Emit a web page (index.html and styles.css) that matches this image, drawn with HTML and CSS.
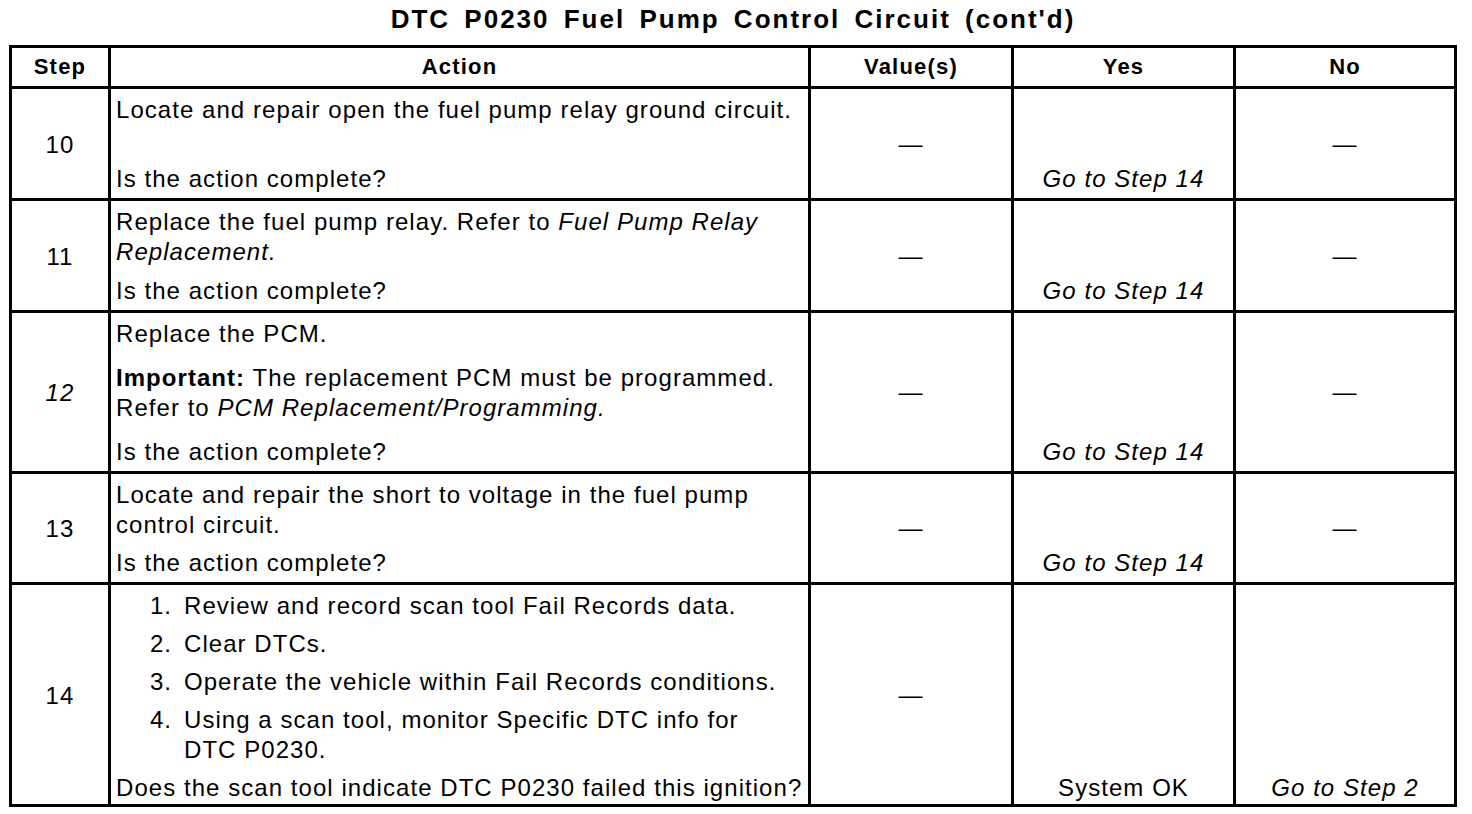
FILE: index.html
```html
<!DOCTYPE html>
<html>
<head>
<meta charset="utf-8">
<link rel="stylesheet" href="styles.css">
</head>
<body>
<div class="page">
  <h1 class="title">DTC P0230 Fuel Pump Control Circuit (cont'd)</h1>
  <div class="table">
    <div class="th">Step</div>
    <div class="th">Action</div>
    <div class="th">Value(s)</div>
    <div class="th">Yes</div>
    <div class="th">No</div>

    <div class="step">10</div>
    <div class="action">
      <p>Locate and repair open the fuel pump relay ground circuit.</p>
      <p>Is the action complete?</p>
    </div>
    <div class="center">—</div>
    <div class="bottom"><i>Go to Step 14</i></div>
    <div class="center">—</div>

    <div class="step">11</div>
    <div class="action">
      <p>Replace the fuel pump relay. Refer to <i>Fuel Pump Relay Replacement.</i></p>
      <p>Is the action complete?</p>
    </div>
    <div class="center">—</div>
    <div class="bottom"><i>Go to Step 14</i></div>
    <div class="center">—</div>

    <div class="step"><i>12</i></div>
    <div class="action">
      <p>Replace the PCM.</p>
      <p><b>Important:</b> The replacement PCM must be programmed. Refer to <i>PCM Replacement/Programming.</i></p>
      <p>Is the action complete?</p>
    </div>
    <div class="center">—</div>
    <div class="bottom"><i>Go to Step 14</i></div>
    <div class="center">—</div>

    <div class="step">13</div>
    <div class="action">
      <p>Locate and repair the short to voltage in the fuel pump control circuit.</p>
      <p>Is the action complete?</p>
    </div>
    <div class="center">—</div>
    <div class="bottom"><i>Go to Step 14</i></div>
    <div class="center">—</div>

    <div class="step">14</div>
    <div class="action last">
      <div class="item"><span class="num">1.</span><span class="txt">Review and record scan tool Fail Records data.</span></div>
      <div class="item"><span class="num">2.</span><span class="txt">Clear DTCs.</span></div>
      <div class="item"><span class="num">3.</span><span class="txt">Operate the vehicle within Fail Records conditions.</span></div>
      <div class="item"><span class="num">4.</span><span class="txt">Using a scan tool, monitor Specific DTC info for DTC P0230.</span></div>
      <p class="nowrap">Does the scan tool indicate DTC P0230 failed this ignition?</p>
    </div>
    <div class="center">—</div>
    <div class="bottom last">System OK</div>
    <div class="bottom last"><i>Go to Step 2</i></div>
  </div>
</div>
</body>
</html>
```
FILE: styles.css
```css
html, body {
  margin: 0;
  padding: 0;
  background: #fff;
  color: #000;
}
body {
  font-family: "Liberation Sans", Arial, sans-serif;
}
.page {
  width: 1448px;
  margin-left: 9px;
}
.title {
  margin: 0;
  height: 45px;
  box-sizing: border-box;
  padding-top: 4px;
  line-height: 30px;
  font-size: 26px;
  font-weight: bold;
  letter-spacing: 2px;
  word-spacing: 5px;
  text-align: center;
}
.table {
  display: grid;
  grid-template-columns: 96px 697px 200px 219px 218px;
  grid-template-rows: 38px 109px 109px 158px 108px 219px;
  gap: 3px;
  padding: 3px;
  background: #000;
  font-size: 24px;
  line-height: 30px;
  letter-spacing: 1.05px;
}
.table > div {
  background: #fff;
  box-sizing: border-box;
}
.th {
  display: flex;
  align-items: center;
  justify-content: center;
  font-weight: bold;
  font-size: 22px;
  letter-spacing: 1.2px;
}
.step, .center {
  display: flex;
  align-items: center;
  justify-content: center;
}
.step {
  padding-top: 2px;
}
.action {
  display: flex;
  flex-direction: column;
  justify-content: space-between;
  padding: 6px 2px 4px 5px;
}
.action.last {
  padding-bottom: 1px;
}
.action p {
  margin: 0;
}
.bottom {
  display: flex;
  flex-direction: column;
  justify-content: flex-end;
  align-items: center;
  padding-bottom: 4px;
}
.bottom.last {
  padding-bottom: 1px;
}
.item {
  display: flex;
  padding-right: 20px;
}
.num {
  flex: none;
  width: 56px;
  text-align: right;
  margin-right: 12px;
}
.nowrap {
  white-space: nowrap;
}
```
